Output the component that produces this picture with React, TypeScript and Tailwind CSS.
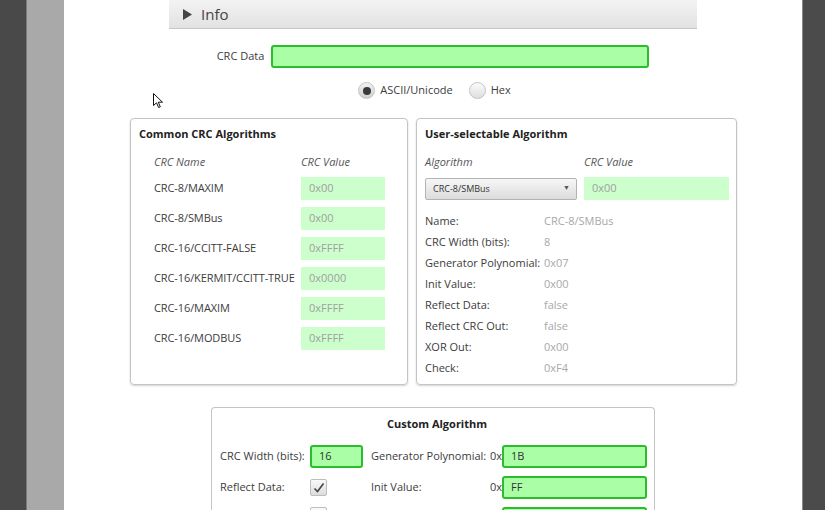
import React from "react";

const font = { fontFamily: '"Open Sans", "Noto Sans", "Liberation Sans", sans-serif' };

const commonRows = [
  { name: "CRC-8/MAXIM", value: "0x00" },
  { name: "CRC-8/SMBus", value: "0x00" },
  { name: "CRC-16/CCITT-FALSE", value: "0xFFFF" },
  { name: "CRC-16/KERMIT/CCITT-TRUE", value: "0x0000" },
  { name: "CRC-16/MAXIM", value: "0xFFFF" },
  { name: "CRC-16/MODBUS", value: "0xFFFF" },
];

const details = [
  { label: "Name:", value: "CRC-8/SMBus" },
  { label: "CRC Width (bits):", value: "8" },
  { label: "Generator Polynomial:", value: "0x07" },
  { label: "Init Value:", value: "0x00" },
  { label: "Reflect Data:", value: "false" },
  { label: "Reflect CRC Out:", value: "false" },
  { label: "XOR Out:", value: "0x00" },
  { label: "Check:", value: "0xF4" },
];

const Radio = ({ checked }: { checked?: boolean }) => (
  <span
    className={`flex h-[17px] w-[17px] items-center justify-center rounded-full border border-[#c4c4c4] ${
      checked
        ? "bg-gradient-to-b from-[#f2f2f2] to-[#cfcfcf]"
        : "bg-gradient-to-b from-[#fbfbfb] to-[#dedede]"
    }`}
  >
    {checked && <span className="h-[8px] w-[8px] rounded-full bg-[#3a3a3a]" />}
  </span>
);

const Checkbox = ({ checked }: { checked?: boolean }) => (
  <span className="flex h-[17px] w-[17px] items-center justify-center rounded-[2px] border border-[#bdbdbd] bg-gradient-to-b from-[#fafafa] to-[#dcdcdc]">
    {checked && (
      <svg width="12" height="12" viewBox="0 0 12 12">
        <path d="M1.5 6.5 L4.5 9.5 L10.5 1.5" fill="none" stroke="#444" strokeWidth="1.6" />
      </svg>
    )}
  </span>
);

const GreenInput = ({ value, className }: { value?: string; className: string }) => (
  <div
    className={`flex h-[23px] items-center rounded-[3px] border-2 border-[#2cbc2c] bg-[#aaffa6] px-[7px] text-[11px] text-[#333] ${className}`}
  >
    {value}
  </div>
);

const ValueBox = ({ value, className }: { value: string; className: string }) => (
  <div className={`flex h-[23px] items-center bg-[#ccffcc] px-[8px] text-[11px] text-[#a0a0a0] ${className}`}>
    {value}
  </div>
);

export default function App() {
  return (
    <div className="flex h-[510px] w-[825px] overflow-hidden bg-white" style={font}>
      <div className="w-[26px] bg-[#494949]" />
      <div className="w-[38px] border-l border-[#7a7a7a] bg-[#a9a9a9]" />

      <main className="relative flex flex-1 flex-col items-center text-[#3c3c3c]">
        {/* info bar */}
        <div className="flex h-[29px] w-[528px] shrink-0 items-center border-b border-[#c6c6c6] bg-gradient-to-b from-[#f3f3f3] to-[#e2e2e2] pl-[14px] text-[#444]">
          <svg width="9" height="11" viewBox="0 0 9 11">
            <path d="M0 0 L9 5.5 L0 11 Z" fill="#444" />
          </svg>
          <span className="ml-[9px] text-[15px]">Info</span>
        </div>

        {/* crc data */}
        <div className="mt-[16px] flex shrink-0 items-center gap-[7px]">
          <span className="text-[11px]">CRC Data</span>
          <GreenInput className="w-[378px]" />
        </div>

        {/* encoding */}
        <div className="ml-[3px] mt-[14px] flex h-[17px] shrink-0 items-center text-[11px]">
          <Radio checked />
          <span className="ml-[5px]">ASCII/Unicode</span>
          <span className="ml-[16px]">
            <Radio />
          </span>
          <span className="ml-[5px]">Hex</span>
        </div>

        {/* cursor */}
        <svg className="absolute left-[89px] top-[93px]" width="11" height="16" viewBox="0 0 11 16">
          <path d="M0.5 0.5 L0.5 12.5 L3.5 9.8 L5.6 14.5 L7.3 13.8 L5.3 9.2 L9.5 9.2 Z" fill="#fff" stroke="#111" strokeWidth="1" />
        </svg>

        {/* panels */}
        <div className="ml-[1px] mt-[19px] flex shrink-0 gap-[8px]">
          <section className="h-[267px] w-[278px] rounded-[4px] border border-[#c4c4c4] pl-[8px] pt-[7px] shadow-[0_1px_2px_rgba(0,0,0,0.18)]">
            <h2 className="h-[15px] text-[11px] leading-[15px] font-bold text-[#222]">Common CRC Algorithms</h2>
            <div className="ml-[15px] mt-[13px] flex h-[16px] items-center text-[11px] italic text-[#555]">
              <span className="w-[147px]">CRC Name</span>
              <span>CRC Value</span>
            </div>
            <div className="ml-[15px] mt-[7px] flex flex-col gap-[7px]">
              {commonRows.map((row) => (
                <div key={row.name} className="flex items-center text-[11px]">
                  <span className="w-[147px] whitespace-nowrap tracking-[-0.1px]">{row.name}</span>
                  <ValueBox value={row.value} className="w-[84px]" />
                </div>
              ))}
            </div>
          </section>

          <section className="h-[267px] w-[321px] rounded-[4px] border border-[#c4c4c4] pl-[8px] pt-[7px] shadow-[0_1px_2px_rgba(0,0,0,0.18)]">
            <h2 className="h-[15px] text-[11px] leading-[15px] font-bold text-[#222]">User-selectable Algorithm</h2>
            <div className="mt-[13px] flex h-[16px] items-center text-[11px] italic text-[#555]">
              <span className="w-[159px]">Algorithm</span>
              <span>CRC Value</span>
            </div>
            <div className="mt-[7px] flex items-center">
              <div className="flex h-[22px] w-[152px] items-center justify-between rounded-[2px] border border-[#b4b4b4] bg-gradient-to-b from-[#f7f7f7] to-[#dcdcdc] pl-[7px] pr-[6px] text-[9px] text-[#333]">
                <span>CRC-8/SMBus</span>
                <span className="text-[7px] text-[#555]">▼</span>
              </div>
              <ValueBox value="0x00" className="ml-[7px] w-[145px]" />
            </div>
            <div className="mt-[11px] flex flex-col">
              {details.map((d) => (
                <div key={d.label} className="flex h-[21px] items-center text-[11px]">
                  <span className="w-[119px] whitespace-nowrap">{d.label}</span>
                  <span className="text-[#a8a8a8]">{d.value}</span>
                </div>
              ))}
            </div>
          </section>
        </div>

        {/* custom */}
        <section className="mt-[22px] w-[444px] shrink-0 rounded-t-[4px] border border-b-0 border-[#c4c4c4] pb-[20px] pl-[8px] pt-[8px] text-[11px]">
          <h2 className="h-[15px] text-center leading-[15px] font-bold text-[#222]">Custom Algorithm</h2>
          <div className="mt-[14px] flex flex-col gap-[8px]">
            <div className="flex items-center">
              <span className="w-[90px] whitespace-nowrap">CRC Width (bits):</span>
              <GreenInput value="16" className="w-[53px]" />
              <span className="ml-[8px] w-[119px] whitespace-nowrap">Generator Polynomial:</span>
              <span className="w-[12px]">0x</span>
              <GreenInput value="1B" className="w-[145px]" />
            </div>
            <div className="flex items-center">
              <span className="w-[90px]">Reflect Data:</span>
              <span className="flex w-[53px]">
                <Checkbox checked />
              </span>
              <span className="ml-[8px] w-[119px]">Init Value:</span>
              <span className="w-[12px]">0x</span>
              <GreenInput value="FF" className="w-[145px]" />
            </div>
            {/* third row is cut off at the bottom of the viewport */}
            <div className="flex items-start">
              <span className="w-[90px]" />
              <span className="flex w-[53px]">
                <Checkbox />
              </span>
              <span className="ml-[8px] w-[119px]" />
              <span className="w-[12px]" />
              <GreenInput className="w-[145px]" />
            </div>
          </div>
        </section>
      </main>

      <div className="w-[23px] border-l border-[#8a8a8a] bg-[#4b4b4b]" />
    </div>
  );
}
